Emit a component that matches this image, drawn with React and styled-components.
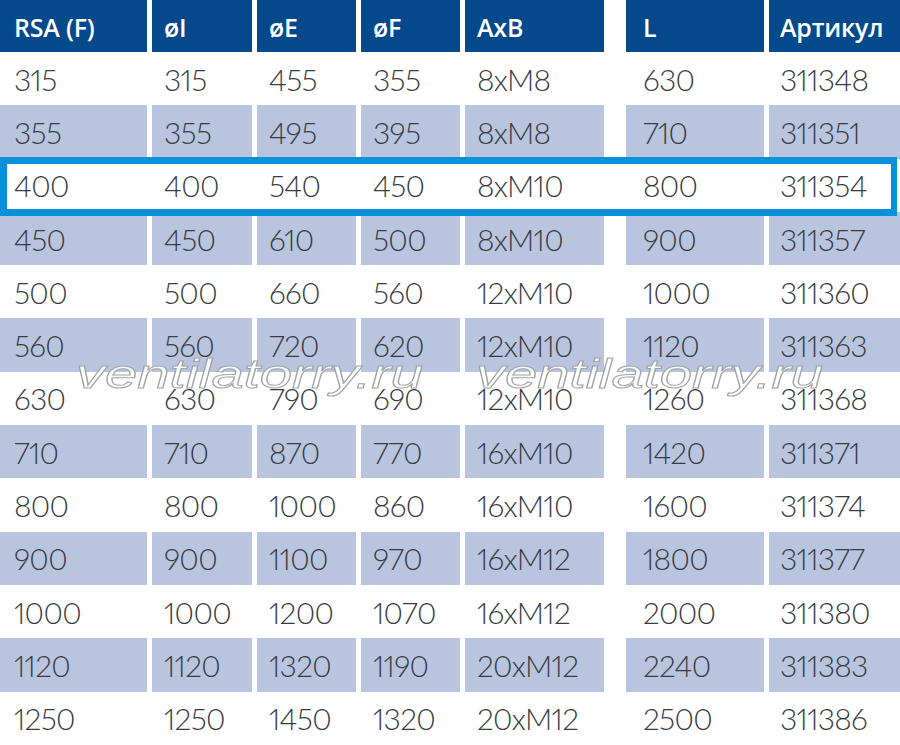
import React from "react";
import styled, { createGlobalStyle } from "styled-components";

const GlobalStyle = createGlobalStyle`
  html, body {
    margin: 0;
    padding: 0;
    background: #ffffff;
  }
  body {
    font-family: "Open Sans", "Noto Sans", sans-serif;
  }
`;

const columns = [
  { title: "RSA (F)", pad: 14 },
  { title: "øI", pad: 12 },
  { title: "øE", pad: 12 },
  { title: "øF", pad: 12 },
  { title: "AxB", pad: 12 },
  { title: "L", pad: 17, shift: 17 },
  { title: "Артикул", pad: 11 },
];

const rows = [
  ["315", "315", "455", "355", "8xM8", "630", "311348"],
  ["355", "355", "495", "395", "8xM8", "710", "311351"],
  ["400", "400", "540", "450", "8xM10", "800", "311354"],
  ["450", "450", "610", "500", "8xM10", "900", "311357"],
  ["500", "500", "660", "560", "12xM10", "1000", "311360"],
  ["560", "560", "720", "620", "12xM10", "1120", "311363"],
  ["630", "630", "790", "690", "12xM10", "1260", "311368"],
  ["710", "710", "870", "770", "16xM10", "1420", "311371"],
  ["800", "800", "1000", "860", "16xM10", "1600", "311374"],
  ["900", "900", "1100", "970", "16xM12", "1800", "311377"],
  ["1000", "1000", "1200", "1070", "16xM12", "2000", "311380"],
  ["1120", "1120", "1320", "1190", "20xM12", "2240", "311383"],
  ["1250", "1250", "1450", "1320", "20xM12", "2500", "311386"],
];

const HIGHLIGHT = 2;

const Table = styled.div`
  position: relative;
  width: 900px;
  height: 745px;
  overflow: hidden;
  display: flex;
  flex-direction: column;
  background: #ffffff;
`;

const Row = styled.div`
  position: relative;
  display: grid;
  grid-template-columns: 147px 100px 99px 99px 139px 155px 131px;
  column-gap: 5px;
  height: ${(props) => (props.$head ? "52px" : "53.3px")};
  flex-shrink: 0;
  z-index: ${(props) => (props.$highlight ? 2 : 0)};

  &::after {
    content: "";
    display: ${(props) => (props.$highlight ? "block" : "none")};
    position: absolute;
    top: -2px;
    bottom: -4px;
    left: 0;
    right: 3px;
    border: 7px solid #0791dc;
    border-right-width: 6px;
    pointer-events: none;
  }
`;

const HeadCell = styled.div`
  display: flex;
  align-items: center;
  margin-left: ${(props) => props.$shift || 0}px;
  padding-left: ${(props) => props.$pad}px;
  background: #03498b;
  color: #ffffff;
  font-family: "Open Sans", "Noto Sans", sans-serif;
  font-weight: 600;
  font-size: 25px;
  letter-spacing: -0.2px;
  padding-top: 1px;
`;

const Cell = styled.div`
  display: flex;
  align-items: center;
  margin-left: ${(props) => props.$shift || 0}px;
  padding-left: ${(props) => props.$pad}px;
  background: ${(props) => (props.$striped ? "#b9c5de" : "#ffffff")};
  color: #383b42;
  font-family: Lato, "Open Sans", sans-serif;
  font-weight: 300;
  font-size: 30px;
  font-variant-numeric: proportional-nums;
  letter-spacing: -0.7px;
`;

const Watermark = styled.div`
  position: absolute;
  top: 346px;
  left: ${(props) => props.$left}px;
  font-family: "Liberation Sans", Arial, sans-serif;
  font-style: italic;
  font-size: 40px;
  line-height: 56px;
  color: rgba(255, 255, 255, 0.85);
  -webkit-text-stroke: 1px #a4a4a4;
  transform: scaleX(1.45);
  transform-origin: left center;
  white-space: nowrap;
  z-index: 3;
  pointer-events: none;
`;

export default function App() {
  return (
    <>
      <GlobalStyle />
      <Table>
        <Row $head>
          {columns.map((col) => (
            <HeadCell key={col.title} $pad={col.pad} $shift={col.shift}>
              {col.title}
            </HeadCell>
          ))}
        </Row>
        {rows.map((row, i) => (
          <Row key={row[6]} $highlight={i === HIGHLIGHT}>
            {row.map((value, c) => (
              <Cell
                key={c}
                $pad={columns[c].pad}
                $shift={columns[c].shift}
                $striped={i % 2 === 1}
              >
                {value}
              </Cell>
            ))}
          </Row>
        ))}
        <Watermark $left={76}>ventilatorry.ru</Watermark>
        <Watermark $left={476}>ventilatorry.ru</Watermark>
      </Table>
    </>
  );
}
